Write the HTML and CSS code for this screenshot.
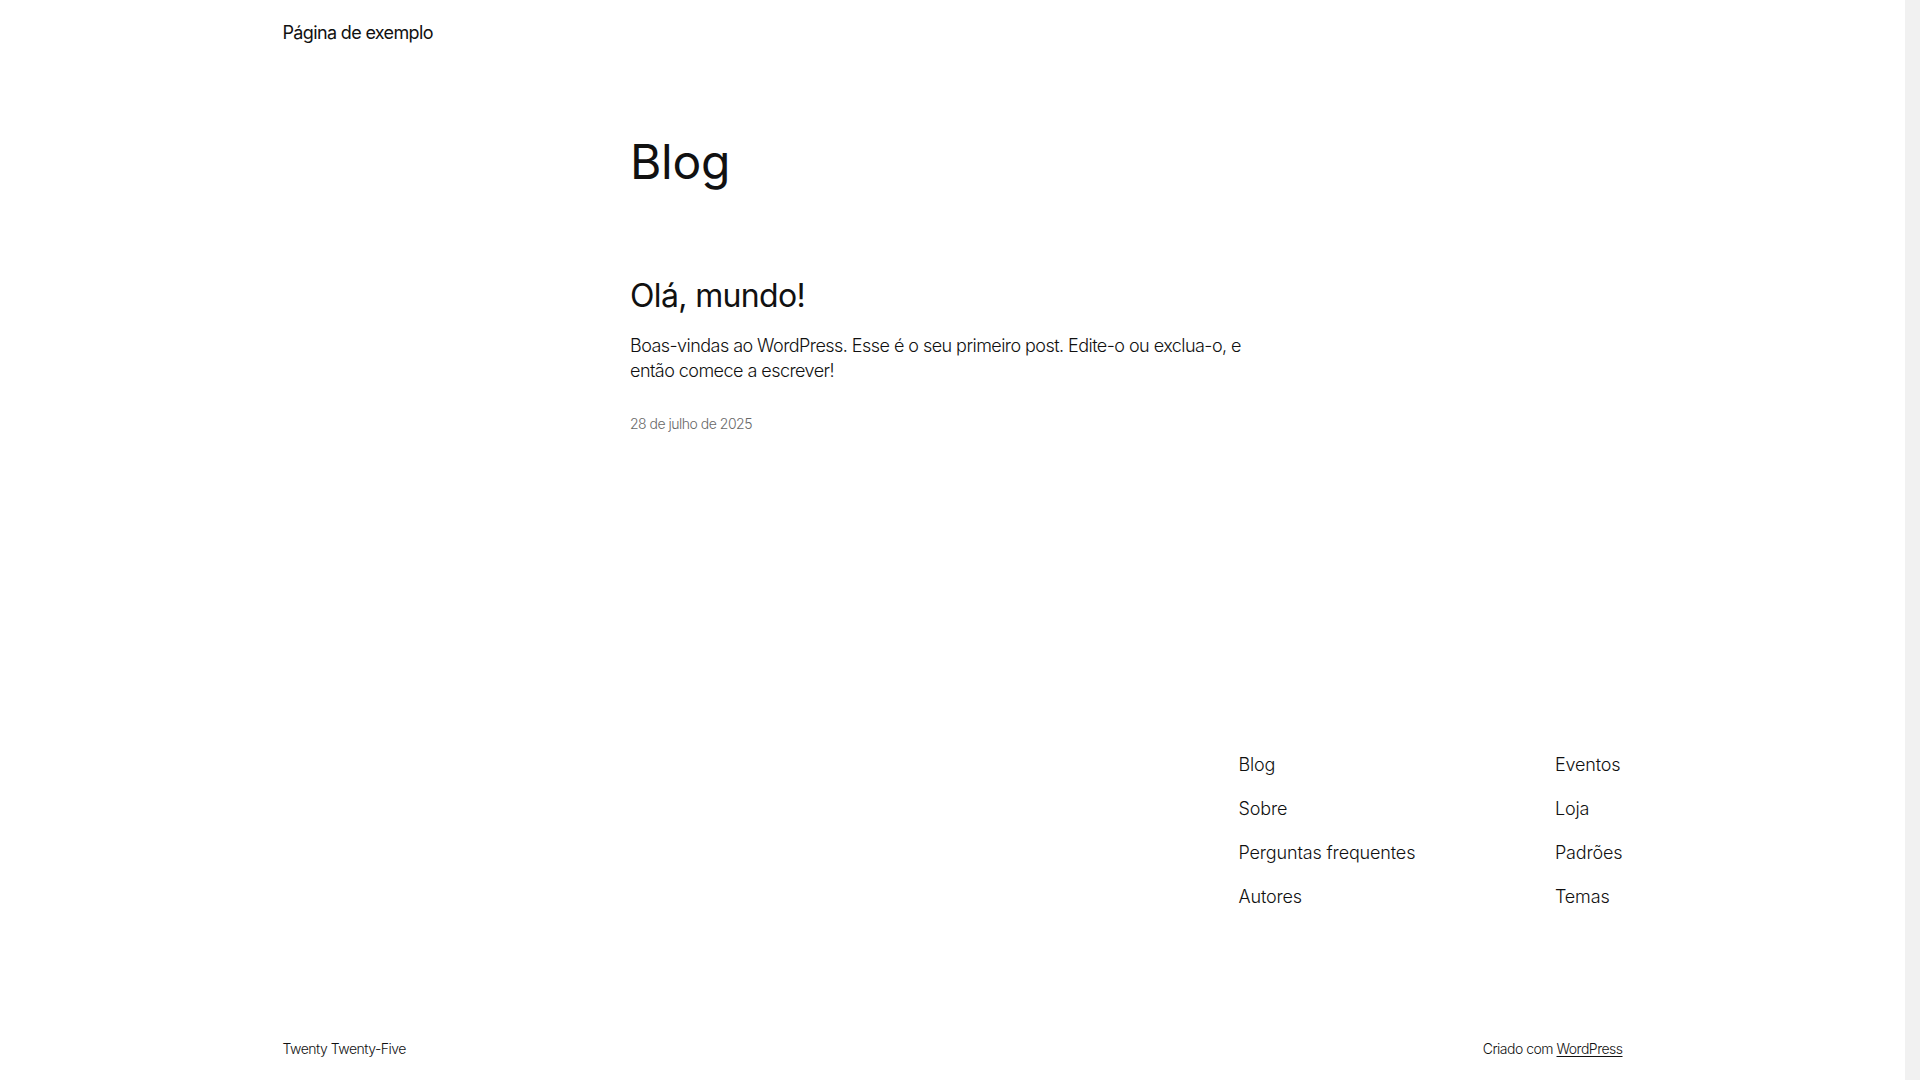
FILE: index.html
```html
<!DOCTYPE html>
<html lang="pt-BR">
<head>
<meta charset="utf-8">
<title>Blog – Página de exemplo</title>
<link rel="stylesheet" href="styles.css">
</head>
<body>
<header class="site-header">
  <div class="wide">
    <a class="site-title" href="#">Página de exemplo</a>
  </div>
</header>
<main class="site-main">
  <div class="content">
    <h1 class="page-title">Blog</h1>
    <article class="post">
      <h2 class="post-title"><a href="#">Olá, mundo!</a></h2>
      <p class="post-excerpt">Boas-vindas ao WordPress. Esse é o seu primeiro post. Edite-o ou exclua-o, e então comece a escrever!</p>
      <div class="post-date">28 de julho de 2025</div>
    </article>
  </div>
</main>
<footer class="site-footer">
  <div class="wide">
    <div class="footer-top">
      <nav class="footer-nav">
        <ul class="nav-col">
          <li><a href="#">Blog</a></li>
          <li><a href="#">Sobre</a></li>
          <li><a href="#">Perguntas frequentes</a></li>
          <li><a href="#">Autores</a></li>
        </ul>
        <ul class="nav-col">
          <li><a href="#">Eventos</a></li>
          <li><a href="#">Loja</a></li>
          <li><a href="#">Padrões</a></li>
          <li><a href="#">Temas</a></li>
        </ul>
      </nav>
    </div>
    <div class="footer-bottom">
      <span class="footer-site">Twenty Twenty-Five</span>
      <span class="credit">Criado com <a href="#">WordPress</a></span>
    </div>
  </div>
</footer>
<div class="scrollbar-track" aria-hidden="true"></div>
</body>
</html>
```
FILE: styles.css
```css
html, body {
  margin: 0;
  padding: 0;
  background: #ffffff;
}

body {
  padding-right: 15px;
  font-family: Inter, "Noto Sans", "Liberation Sans", sans-serif;
  color: #111111;
  font-size: 18px;
  font-weight: 300;
  line-height: 1.4;
  letter-spacing: -0.15px;
  -webkit-font-smoothing: antialiased;
}

.scrollbar-track {
  position: fixed;
  top: 0;
  right: 0;
  bottom: 0;
  width: 15px;
  background: #f1f1f1;
}

a {
  color: inherit;
  text-decoration: none;
}

.wide {
  max-width: 1340px;
  margin: 0 auto;
}

.content {
  max-width: 645px;
  margin: 0 auto;
}

/* Header */
.site-header {
  padding: 20px 50px;
}

.site-title {
  font-size: 18px;
  font-weight: 400;
  line-height: 1.4;
  letter-spacing: -0.65px;
  display: inline-block;
}

/* Main */
.site-main {
  padding: 69.5px 50px 0;
}

.page-title {
  margin: 0;
  font-size: 48px;
  font-weight: 400;
  line-height: 1.125;
  letter-spacing: -0.3px;
}

.post {
  margin-top: 89.7px;
}

.post-title {
  margin: 0;
  font-size: 32px;
  font-weight: 400;
  line-height: 1.125;
  letter-spacing: -0.65px;
}

.post-excerpt {
  margin: 18.8px 0 0;
  font-size: 18px;
  line-height: 1.4;
  letter-spacing: -0.55px;
}

.post-date {
  margin-top: 30px;
  font-size: 14px;
  line-height: 1.4;
  letter-spacing: -0.5px;
  color: #686868;
}

/* Footer */
.site-footer {
  padding: 319px 50px 50px;
}

.footer-top {
  display: flex;
  justify-content: flex-end;
}

.footer-nav {
  width: 384px;
  display: flex;
  justify-content: space-between;
}

.nav-col {
  list-style: none;
  margin: 0;
  padding: 0;
  display: flex;
  flex-direction: column;
  gap: 18.8px;
}

.nav-col li {
  font-size: 18px;
  line-height: 1.4;
}

.footer-bottom {
  margin-top: 130px;
  display: flex;
  justify-content: space-between;
  font-size: 14px;
  line-height: 1.4;
  letter-spacing: -0.5px;
}

.credit a {
  text-decoration: underline;
  text-underline-offset: 2px;
  text-decoration-thickness: 1px;
}
```
